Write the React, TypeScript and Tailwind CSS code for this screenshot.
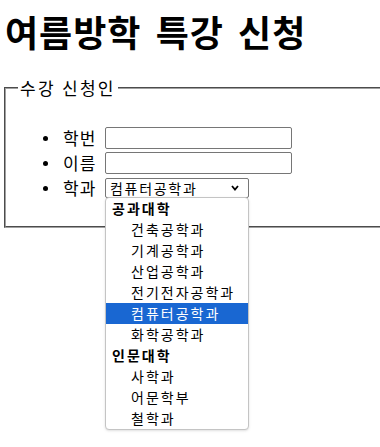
import React from "react"

const font = "font-['Noto_Sans_CJK_KR',sans-serif]"

const rows = [
  { label: "공과대학", group: true },
  { label: "건축공학과" },
  { label: "기계공학과" },
  { label: "산업공학과" },
  { label: "전기전자공학과" },
  { label: "컴퓨터공학과", selected: true },
  { label: "화학공학과" },
  { label: "인문대학", group: true },
  { label: "사학과" },
  { label: "어문학부" },
  { label: "철학과" },
]

function Bullet() {
  return (
    <span className="w-[20px] flex items-center">
      <span className="block w-[5px] h-[5px] rounded-full bg-black" />
    </span>
  )
}

export default function App() {
  return (
    <div className={`relative w-[380px] h-[447px] overflow-hidden bg-white text-black ${font}`}>
      <h1 className="pt-[11px] pl-[5px] text-[36px] leading-[40px] font-bold tracking-[1px] [word-spacing:5px] whitespace-nowrap">
        여름방학 특강 신청
      </h1>

      <fieldset className="mt-[25px] ml-[4px] w-[400px] border-2 border-r-0 [border-style:groove] border-[#a0a0a0] px-[12px] pb-[28px]">
        <legend className="px-[2px] text-[17px] leading-[24px] tracking-[2.3px]">수강 신청인</legend>

        <ul className="mt-[27px] pl-[25px] text-[17px] tracking-[1px]">
          <li className="flex items-center h-[22px] mb-[3px]">
            <Bullet />
            <span className="w-[42px]">학번</span>
            <span className="block w-[187px] h-[22px] border border-[#767676] rounded-[2px]" />
          </li>
          <li className="flex items-center h-[22px] mb-[4px]">
            <Bullet />
            <span className="w-[42px]">이름</span>
            <span className="block w-[187px] h-[22px] border border-[#767676] rounded-[2px]" />
          </li>
          <li className="flex items-center h-[20px]">
            <Bullet />
            <span className="w-[42px]">학과</span>
            <span className="flex items-center justify-between w-[144px] h-[20px] border border-[#767676] rounded-[2px] pl-[4px] pr-[9px] text-[14px] tracking-[1.7px]">
              컴퓨터공학과
              <svg width="8" height="6" viewBox="0 0 8 6">
                <polyline points="1,1 4,4.5 7,1" fill="none" stroke="black" strokeWidth="1.8" />
              </svg>
            </span>
          </li>
        </ul>
      </fieldset>

      <div className="absolute left-[105px] top-[197px] w-[144px] h-[233px] border border-[#c4c4c4] rounded-[4px] bg-white shadow-sm text-[14px] tracking-[2px]">
        {rows.map((r) => (
          <div
            key={r.label}
            className={
              r.group
                ? "h-[21px] flex items-center pl-[6px] font-bold"
                : r.selected
                  ? "h-[21px] flex items-center pl-[25px] bg-[#1967d2] text-white"
                  : "h-[21px] flex items-center pl-[25px]"
            }
          >
            {r.label}
          </div>
        ))}
      </div>
    </div>
  )
}
